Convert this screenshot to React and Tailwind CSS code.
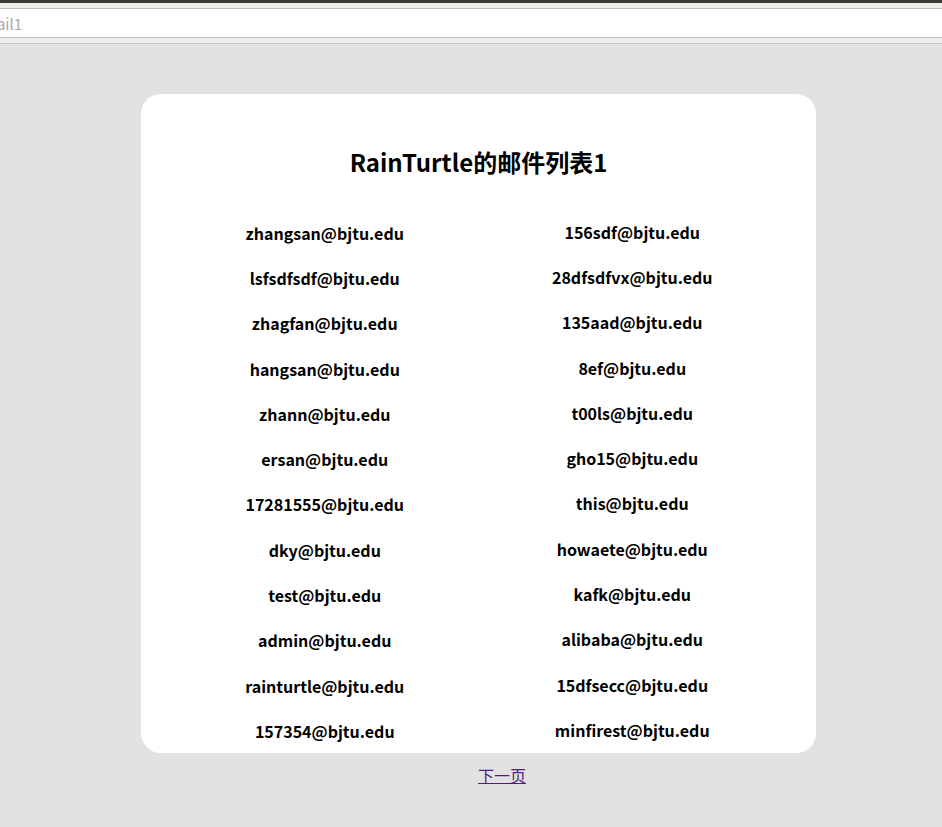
export default function App() {
  const left = ["zhangsan@bjtu.edu","lsfsdfsdf@bjtu.edu","zhagfan@bjtu.edu","hangsan@bjtu.edu","zhann@bjtu.edu","ersan@bjtu.edu","17281555@bjtu.edu","dky@bjtu.edu","test@bjtu.edu","admin@bjtu.edu","rainturtle@bjtu.edu","157354@bjtu.edu"];
  const right = ["156sdf@bjtu.edu","28dfsdfvx@bjtu.edu","135aad@bjtu.edu","8ef@bjtu.edu","t00ls@bjtu.edu","gho15@bjtu.edu","this@bjtu.edu","howaete@bjtu.edu","kafk@bjtu.edu","alibaba@bjtu.edu","15dfsecc@bjtu.edu","minfirest@bjtu.edu"];
  const font = { fontFamily: '"Noto Sans CJK SC", "Noto Sans", sans-serif' };
  return (
    <div className="min-h-[827px] w-[942px] bg-[#e2e2e2] overflow-hidden" style={font}>
      <div className="h-[3px] bg-[#3c3b37]" />
      <div className="h-[5px] bg-[#f0efed]" />
      <div className="h-[30px] bg-white border-y border-[#bfbebb] flex items-center overflow-hidden">
        <span className="text-[15px] text-[#a9a6a2] -ml-[17px] leading-none whitespace-nowrap">mail1</span>
      </div>
      <div className="h-[6px] bg-[#f0efed] border-b border-[#c8c7c4]" />
      <div className="ml-[141px] mt-[50px] w-[675px] h-[659px] bg-white rounded-[20px] px-[30px] pt-[48px] flex flex-col">
        <h1 className="text-center text-[24px] leading-[40px] font-bold text-black">RainTurtle的邮件列表1</h1>
        <div className="grid grid-cols-2 mt-[28px]">
          <div className="flex flex-col">
            {left.map((e) => (
              <div key={e} className="h-[45.3px] flex items-center justify-center text-[16px] font-bold text-black">{e}</div>
            ))}
          </div>
          <div className="flex flex-col -mt-px">
            {right.map((e) => (
              <div key={e} className="h-[45.3px] flex items-center justify-center text-[16px] font-bold text-black">{e}</div>
            ))}
          </div>
        </div>
      </div>
      <div className="ml-[141px] w-[722px] mt-[10px] flex justify-center">
        <a href="#" className="text-[16px] leading-[24px] text-[#551a8b] underline">下一页</a>
      </div>
    </div>
  );
}
